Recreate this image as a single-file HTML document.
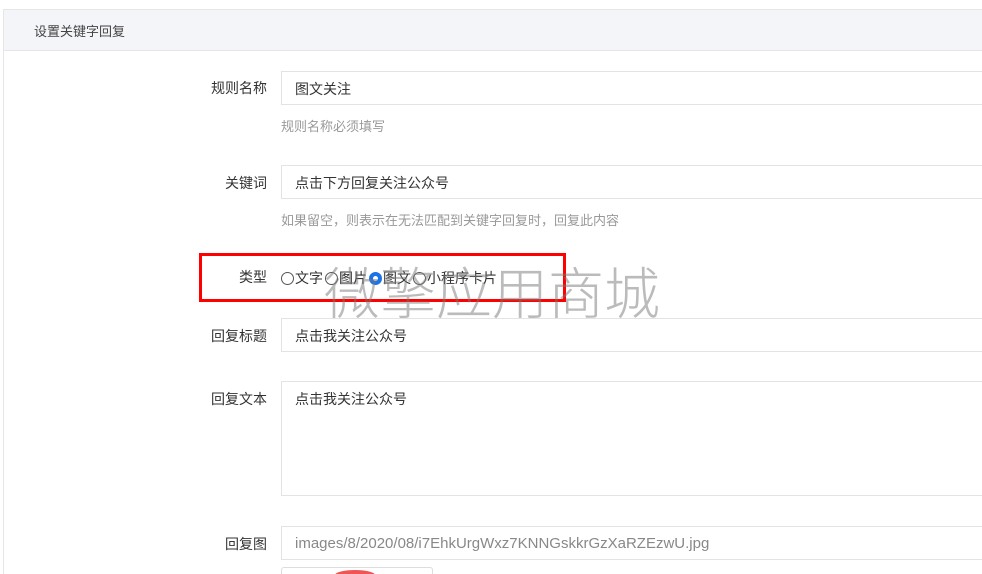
<!DOCTYPE html>
<html><head><meta charset="utf-8"><style>
html,body{margin:0;width:982px;height:574px;overflow:hidden;background:#fff;font-family:"Liberation Sans","Noto Sans CJK SC",sans-serif;font-size:14px;color:#333;position:relative}
.panel{position:absolute;left:3px;top:9px;width:978px;height:564px;border:1px solid #e6e6e6;border-bottom:none;border-right:none}
.hd{position:absolute;left:4px;top:10px;width:978px;height:40px;background:#f4f5f9;border-bottom:1px solid #e6e6e6}
.hd span{position:absolute;left:30px;top:11px;font-size:13px;color:#444}
.lb{position:absolute;right:715px;font-size:14px;color:#333;white-space:nowrap}
.in{position:absolute;left:281px;width:701px;border:1px solid #e3e3e3;border-right:none;box-sizing:border-box;padding-left:13px;color:#333;white-space:nowrap;overflow:hidden}
.hint{position:absolute;left:281px;color:#999;font-size:13px}
.red{position:absolute;left:199px;top:253px;width:361px;height:43px;border:3px solid #f00}
.wm{position:absolute;left:324px;top:250px;font-size:56px;color:rgba(120,120,120,.5);white-space:nowrap;font-family:"Noto Sans CJK SC",sans-serif;font-weight:300}
.r{display:inline-block;width:13px;height:13px;border:1px solid #555;border-radius:50%;vertical-align:-2px;box-sizing:border-box;margin-right:1px;margin-left:2px}
.r:first-child{margin-left:0}
.r.on{border:4px solid #1a73e8;background:#fff}
</style></head><body>
<div class="panel"></div>
<div class="hd"><span>设置关键字回复</span></div>
<div class="lb" style="top:78px">规则名称</div>
<div class="in" style="top:71px;height:34px;line-height:34px">图文关注</div>
<div class="hint" style="top:116px">规则名称必须填写</div>
<div class="lb" style="top:173px">关键词</div>
<div class="in" style="top:165px;height:34px;line-height:34px">点击下方回复关注公众号</div>
<div class="hint" style="top:210px">如果留空，则表示在无法匹配到关键字回复时，回复此内容</div>
<div class="lb" style="top:267px">类型</div>
<div style="position:absolute;left:281px;top:268px;white-space:nowrap;color:#333"><span class="r"></span>文字<span class="r"></span>图片<span class="r on"></span>图文<span class="r"></span>小程序卡片</div>
<div class="red"></div>
<div class="wm">微擎应用商城</div>
<div class="lb" style="top:326px">回复标题</div>
<div class="in" style="top:318px;height:34px;line-height:34px">点击我关注公众号</div>
<div class="lb" style="top:389px">回复文本</div>
<div class="in" style="top:381px;height:115px;padding-top:8px;line-height:18px">点击我关注公众号</div>
<div class="lb" style="top:534px">回复图</div>
<div class="in" style="top:526px;height:34px;line-height:34px;color:#888;font-size:15px">images/8/2020/08/i7EhkUrgWxz7KNNGskkrGzXaRZEzwU.jpg</div>
<div style="position:absolute;left:281px;top:567px;width:150px;height:7px;border:1px solid #ddd;border-bottom:none;border-radius:3px 3px 0 0;overflow:hidden"><div style="position:absolute;left:53px;top:2px;width:40px;height:10px;border-radius:50%;background:#e55"></div></div>
</body></html>
